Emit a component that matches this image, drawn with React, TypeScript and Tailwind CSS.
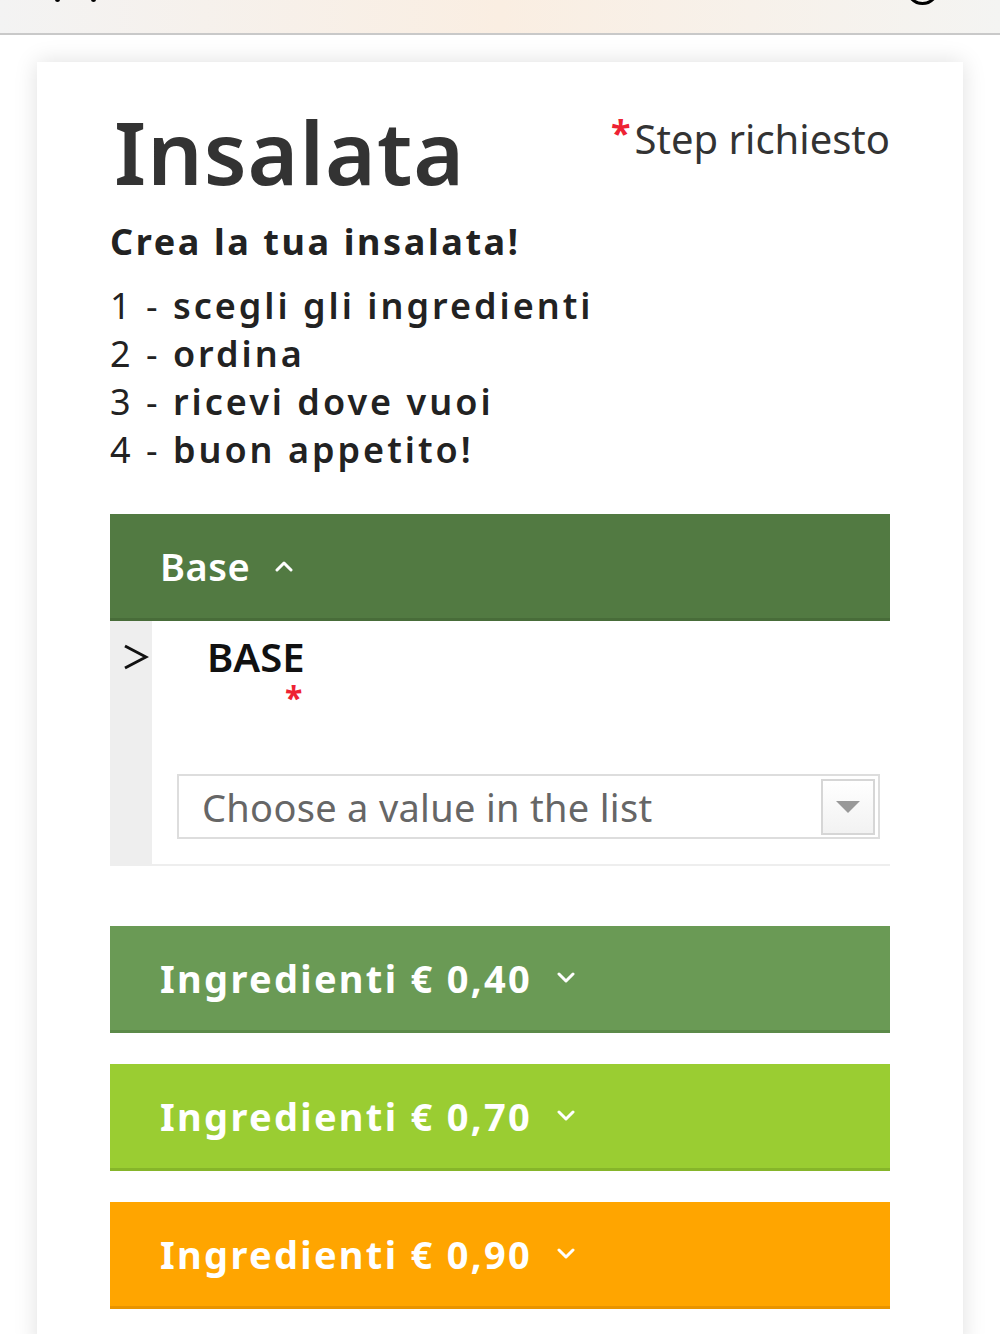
import React from "react";

const font = { fontFamily: '"Noto Sans", "Open Sans", sans-serif' };

function ChevronUp() {
  return (
    <svg width="20" height="12" viewBox="0 0 20 12" className="ml-[24px]">
      <path d="M3 10 L10 3 L17 10" fill="none" stroke="white" strokeWidth="3" strokeLinecap="round" strokeLinejoin="round" />
    </svg>
  );
}

function ChevronDown() {
  return (
    <svg width="20" height="12" viewBox="0 0 20 12" className="ml-[24px]">
      <path d="M3 2 L10 9 L17 2" fill="none" stroke="white" strokeWidth="3" strokeLinecap="round" strokeLinejoin="round" />
    </svg>
  );
}

function Bar({ label, bg, border }: { label: string; bg: string; border: string }) {
  return (
    <div className={`flex h-[107px] items-center border-b-[3px] pl-[50px] ${bg} ${border}`}>
      <span className="text-[38px] font-bold leading-none text-white tracking-[2.3px]">{label}</span>
      <ChevronDown />
    </div>
  );
}

export default function App() {
  return (
    <div className="w-[1000px] min-h-[1334px] bg-white overflow-hidden" style={font}>
      {/* top bar */}
      <div className="relative h-[35px] border-b-2 border-[#c9c9c9] bg-gradient-to-r from-[#f3f3f3] via-[#faeee2] to-[#f4f4f2]">
        <div className="absolute left-[55px] top-[-3px] h-[5px] w-[5px] rounded-full bg-black" />
        <div className="absolute left-[91px] top-[-3px] h-[5px] w-[5px] rounded-full bg-black" />
        <div className="absolute left-[906px] top-[-28px] h-[33px] w-[33px] rounded-full border-[3px] border-black" />
      </div>

      {/* card */}
      <div className="mx-[37px] mt-[27px] bg-white px-[73px] pt-[46px] pb-[40px] shadow-[0_0_22px_rgba(0,0,0,0.13)]">
        <div className="flex items-start justify-between">
          <h1 className="ml-[4px] text-[87px] font-semibold leading-none text-[#333] tracking-[1px]">Insalata</h1>
          <div className="mt-[11px] flex items-start text-[40px] leading-none text-[#333]">
            <span className="mt-[-4px] mr-[4px] text-[36px] font-bold text-[#ee2233]">*</span>
            <span>Step richiesto</span>
          </div>
        </div>

        <div className="mt-[29px] text-[36px] font-bold leading-none text-[#222] tracking-[2.6px]">Crea la tua insalata!</div>

        <div className="mt-[22px] text-[36px] leading-[48px] text-[#222] tracking-[3px]">
          <div><span className="font-normal">1 - </span><span className="font-semibold">scegli gli ingredienti</span></div>
          <div><span className="font-normal">2 - </span><span className="font-semibold">ordina</span></div>
          <div><span className="font-normal">3 - </span><span className="font-semibold">ricevi dove vuoi</span></div>
          <div><span className="font-normal">4 - </span><span className="font-semibold">buon appetito!</span></div>
        </div>

        {/* Base section */}
        <div className="mt-[40px]">
          <div className="flex h-[107px] items-center border-b-[3px] border-[#486c39] bg-[#527a42] pl-[50px]">
            <span className="text-[38px] font-semibold leading-none text-white tracking-[0.5px]">Base</span>
            <ChevronUp />
          </div>
          <div className="flex border-b-2 border-[#eeeeee]">
            <div className="w-[42px] bg-[#eeeeee] pt-[22px] pl-[12px]">
              <svg width="27" height="28" viewBox="0 0 27 28">
                <path d="M3 3 L24 14 L3 25" fill="none" stroke="#111" strokeWidth="3" />
              </svg>
            </div>
            <div className="flex-1 pt-[16px] pb-[25px]">
              <div className="pl-[55px]">
                <div className="text-[40px] font-semibold leading-none text-[#111]">BASE</div>
                <div className="ml-[78px] mt-[11px] text-[32px] font-bold leading-[20px] text-[#ee2233]">*</div>
              </div>
              <div className="ml-[25px] mr-[10px] mt-[66px] flex h-[65px] items-center border-2 border-[#dddddd] bg-white pl-[23px] pr-[3px]">
                <span className="flex-1 text-[38px] leading-none text-[#666] tracking-[0.3px]">Choose a value in the list</span>
                <div className="flex h-[56px] w-[54px] items-center justify-center border-2 border-[#d6d6d6] bg-gradient-to-b from-white to-[#f2f2f2]">
                  <svg width="26" height="14" viewBox="0 0 26 14">
                    <path d="M1 1 L25 1 L13 13 Z" fill="#999" />
                  </svg>
                </div>
              </div>
            </div>
          </div>
        </div>

        <div className="mt-[60px] flex flex-col gap-[31px]">
          <Bar label="Ingredienti € 0,40" bg="bg-[#6a9a55]" border="border-[#5c8a49]" />
          <Bar label="Ingredienti € 0,70" bg="bg-[#9acd32]" border="border-[#86b52a]" />
          <Bar label="Ingredienti € 0,90" bg="bg-[#ffa500]" border="border-[#e89400]" />
        </div>
      </div>
    </div>
  );
}
